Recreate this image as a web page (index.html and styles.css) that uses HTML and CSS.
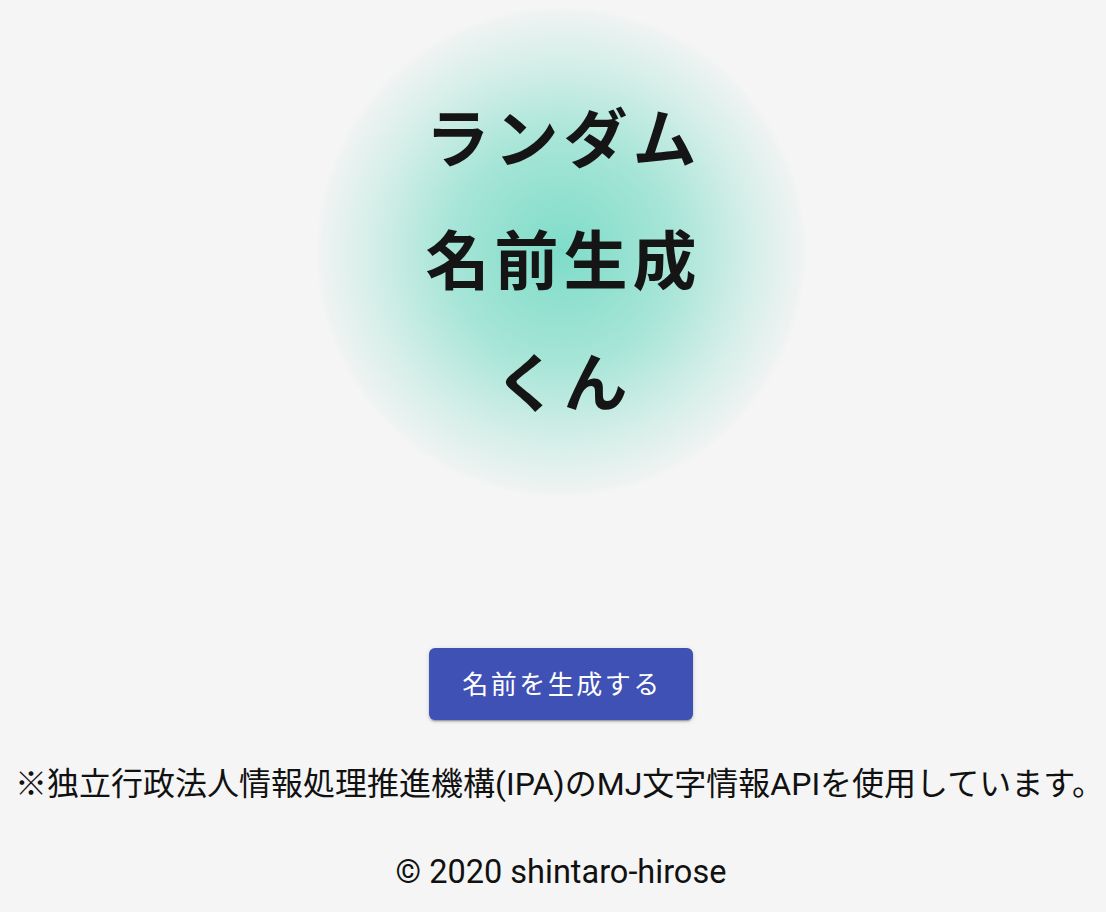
FILE: index.html
```html
<!DOCTYPE html>
<html lang="ja">
<head>
<meta charset="utf-8">
<title>ランダム名前生成くん</title>
<link rel="stylesheet" href="styles.css">
</head>
<body>
<main class="page">
  <div class="hero">
    <h1 class="title">
      <span class="line">ランダム</span>
      <span class="line">名前生成</span>
      <span class="line">くん</span>
    </h1>
  </div>
  <button class="btn" type="button">名前を生成する</button>
  <p class="note">※独立行政法人情報処理推進機構(IPA)のMJ文字情報APIを使用しています。</p>
  <footer class="footer">© 2020 shintaro-hirose</footer>
</main>
</body>
</html>
```
FILE: styles.css
```css
html, body {
  margin: 0;
  padding: 0;
  background: #f5f5f5;
}
body {
  font-family: Roboto, "Noto Sans CJK JP", sans-serif;
  color: #111;
}
.page {
  display: flex;
  flex-direction: column;
  align-items: center;
  box-sizing: border-box;
  width: 1106px;
  height: 912px;
  padding-left: 16px;
}
.page > * {
  flex-shrink: 0;
}
.hero {
  margin-top: 6px;
  width: 492px;
  height: 492px;
  border-radius: 50%;
  background: radial-gradient(circle closest-side, #7fdcc9 0%, #a6e5d7 45%, #d9efea 80%, #eef3f2 97%, rgba(245,245,245,0) 100%);
  display: flex;
  align-items: center;
  justify-content: center;
}
.title {
  margin: 0;
  display: flex;
  flex-direction: column;
  align-items: center;
  font-family: "Noto Sans CJK JP", sans-serif;
  font-weight: 700;
  font-size: 64px;
  line-height: 122px;
  letter-spacing: 5px;
  color: #151515;
  padding-left: 5px;
  padding-top: 8px;
}
.btn {
  margin-top: 150px;
  width: 264px;
  height: 72px;
  border: none;
  border-radius: 6px;
  background: #3f51b5;
  color: #fff;
  font-family: "Noto Sans CJK JP", sans-serif;
  font-size: 26px;
  letter-spacing: 2.5px;
  line-height: 1;
  box-shadow: 0 3px 1px -2px rgba(0,0,0,.2), 0 2px 2px 0 rgba(0,0,0,.14), 0 1px 5px 0 rgba(0,0,0,.12);
  padding: 0 0 2px 2px;
}
.note {
  margin: 44px 0 0 -3px;
  font-size: 32px;
  line-height: 40px;
  white-space: nowrap;
  color: #111;
}
.footer {
  margin-top: 48px;
  font-size: 32.5px;
  line-height: 40px;
  color: #111;
}
```
